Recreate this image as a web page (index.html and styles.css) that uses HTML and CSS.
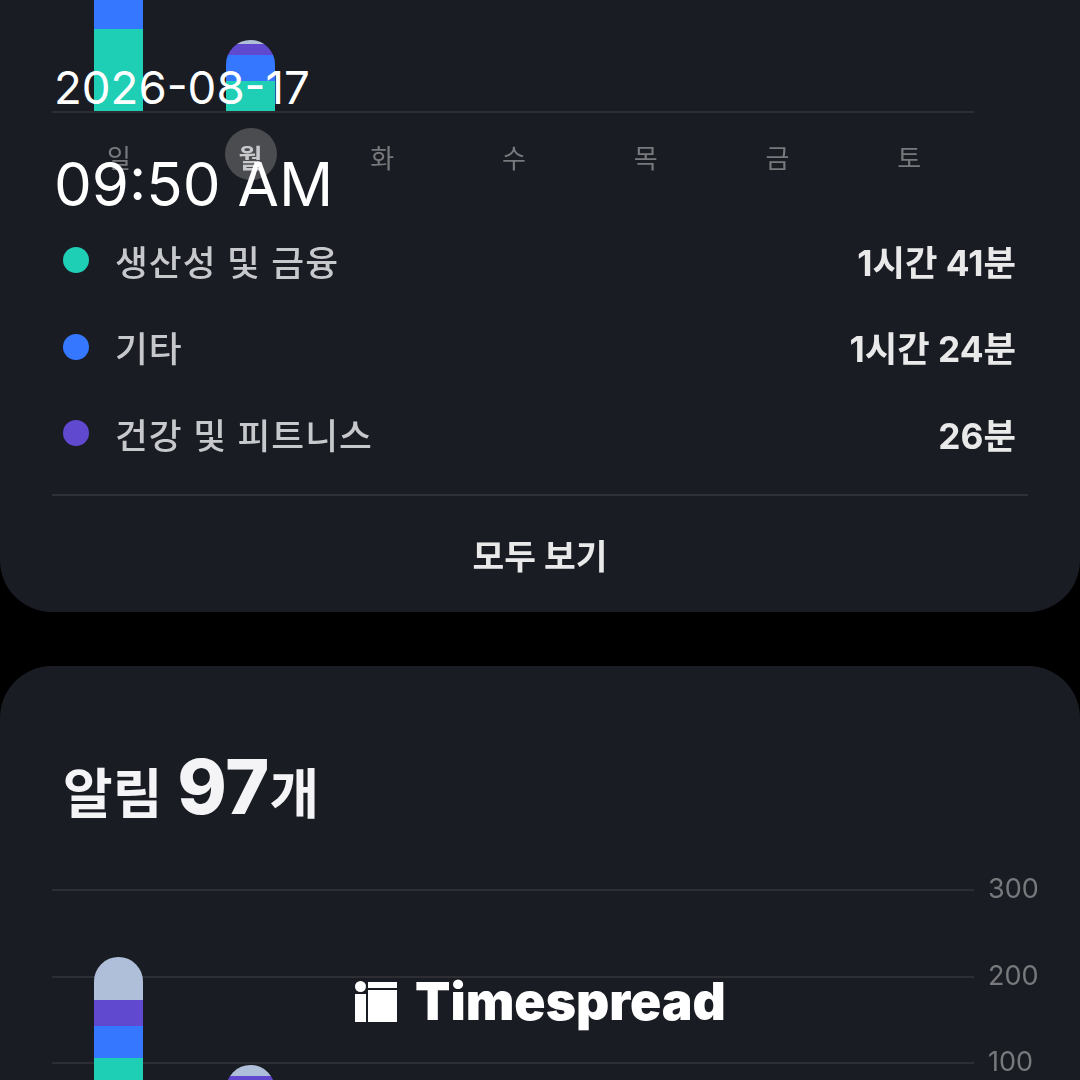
FILE: index.html
```html
<!DOCTYPE html>
<html lang="ko">
<head>
<meta charset="utf-8">
<title>Timespread</title>
<link rel="stylesheet" href="styles.css">
</head>
<body>
<main class="app">
  <section class="card card-usage">
    <div class="plot plot-usage">
      <div class="bars">
        <div class="bar" style="height:200px">
          <i class="seg blue" style="height:118px"></i>
          <i class="seg teal" style="height:82px"></i>
        </div>
        <div class="bar" style="height:71px">
          <i class="seg light" style="height:4px"></i>
          <i class="seg purple" style="height:11px"></i>
          <i class="seg blue" style="height:26px"></i>
          <i class="seg teal" style="height:30px"></i>
        </div>
      </div>
    </div>
    <div class="days">
      <span>일</span><span class="today">월</span><span>화</span><span>수</span><span>목</span><span>금</span><span>토</span>
    </div>
    <ul class="legend">
      <li class="legend-row"><i class="dot teal"></i><span class="name">생산성 및 금융</span><b class="value">1시간 41분</b></li>
      <li class="legend-row"><i class="dot blue"></i><span class="name">기타</span><b class="value">1시간 24분</b></li>
      <li class="legend-row"><i class="dot purple"></i><span class="name">건강 및 피트니스</span><b class="value">26분</b></li>
    </ul>
    <div class="more">모두 보기</div>
  </section>
  <section class="card card-alerts">
    <h2 class="title">알림 <span class="num">97</span>개</h2>
    <div class="plot plot-alerts">
      <div class="lines">
        <div class="line"><span>300</span></div>
        <div class="line"><span>200</span></div>
        <div class="line"><span>100</span></div>
      </div>
      <div class="bars">
        <div class="bar" style="height:192px">
          <i class="seg light" style="height:43px"></i>
          <i class="seg purple" style="height:26px"></i>
          <i class="seg blue" style="height:32px"></i>
          <i class="seg teal" style="height:91px"></i>
        </div>
        <div class="bar" style="height:84px">
          <i class="seg light" style="height:11px"></i>
          <i class="seg purple" style="height:14px"></i>
          <i class="seg blue" style="height:20px"></i>
          <i class="seg teal" style="height:39px"></i>
        </div>
      </div>
    </div>
  </section>
</main>
<div class="stamp">
  <div class="date">2026-08-17</div>
  <div class="time">09:50 AM</div>
</div>
<div class="brand">
  <svg class="brand-icon" width="42" height="42" viewBox="0 0 42 42" aria-hidden="true">
    <circle cx="5.5" cy="5.5" r="5.5" fill="#fff"/>
    <rect x="0" y="13" width="11" height="28" fill="#fff"/>
    <rect x="13" y="1" width="29" height="6" fill="#fff"/>
    <rect x="13" y="9" width="29" height="32" fill="#fff"/>
  </svg>
  <span class="brand-name">Timespread</span>
</div>
</body>
</html>
```
FILE: styles.css
```css
* { box-sizing: border-box; margin: 0; padding: 0; }
html, body { width: 1080px; height: 1080px; overflow: hidden; background: #000; }
body { position: relative; font-family: "Inter", "Noto Sans CJK KR", sans-serif; color: #fff; }

.app { display: flex; flex-direction: column; gap: 54px; filter: blur(0.6px); }
.card { background: #1a1c23; padding: 0 52px; }
.card-usage { height: 612px; border-radius: 0 0 52px 52px; display: flex; flex-direction: column; }
.card-alerts { height: 600px; border-radius: 52px 52px 0 0; }

.plot { position: relative; width: 922px; }
.plot-usage { height: 113px; flex: none; overflow: hidden; border-bottom: 2px solid #2c2e34; }
.plot-alerts { height: 260px; margin-top: 36px; }

.bars { position: absolute; left: 1px; top: 0; width: 922px; height: 100%; display: grid; grid-template-columns: repeat(7, 1fr); grid-template-rows: 100%; align-items: end; }
.plot-alerts .bars { height: 260px; }
.bar { width: 49px; flex: none; justify-self: center; border-radius: 25px 25px 0 0; overflow: hidden; display: flex; flex-direction: column; }
.seg { display: block; flex: none; }
.teal { background: #1ecfb6; }
.blue { background: #3677ff; }
.purple { background: #6049cf; }
.light { background: #b0bfd9; }

.days { width: 922px; display: grid; grid-template-columns: repeat(7, 1fr); justify-items: center; margin-top: 15px; font-size: 26px; line-height: 62px; color: #77797c; }
.days span { width: 52px; height: 52px; text-align: center; border-radius: 50%; transform: translateX(1px); }
.days .today { background: #4b4c50; color: #c9c9cb; font-weight: 700; }

.legend { list-style: none; margin-top: 50px; display: flex; flex-direction: column; gap: 26px; }
.legend-row { display: flex; align-items: center; height: 60.5px; padding: 0 12px 0 11px; }
.dot { width: 26px; height: 26px; border-radius: 50%; flex: none; margin-right: 26px; }
.name { font-size: 35.7px; letter-spacing: 1px; font-weight: 500; color: #c7c8cb; }
.value { margin-left: auto; font-size: 35.3px; font-weight: 700; color: #e9e9ea; }

.more { margin-top: 30px; border-top: 2px solid #303137; height: 116px; padding-top: 3px; display: flex; align-items: center; justify-content: center; font-size: 34.5px; font-weight: 700; color: #e9e9ea; }

.title { height: 187px; padding: 59px 0 0 11px; line-height: 124px; font-size: 54px; font-weight: 700; color: #f4f4f6; white-space: nowrap; }
.num { font-size: 75px; font-weight: 800; margin-left: 2px; }

.lines { display: flex; flex-direction: column; gap: 84.5px; }
.line { height: 2px; width: 922px; background: #2c2e34; position: relative; }
.line span { position: absolute; left: 936px; top: -17px; font-size: 27px; line-height: 34px; color: #77797c; }

.stamp { position: absolute; left: 54px; top: 58px; color: #fff; }
.date { font-size: 45.6px; line-height: 60px; }
.time { font-size: 60px; line-height: 72px; margin-top: 30px; }

.brand { position: absolute; left: 355px; top: 971px; display: flex; align-items: center; gap: 18px; }
.brand-icon { margin-top: 2px; }
.brand-name { font-size: 51.6px; font-weight: 900; line-height: 60px; color: #fff; }
```
